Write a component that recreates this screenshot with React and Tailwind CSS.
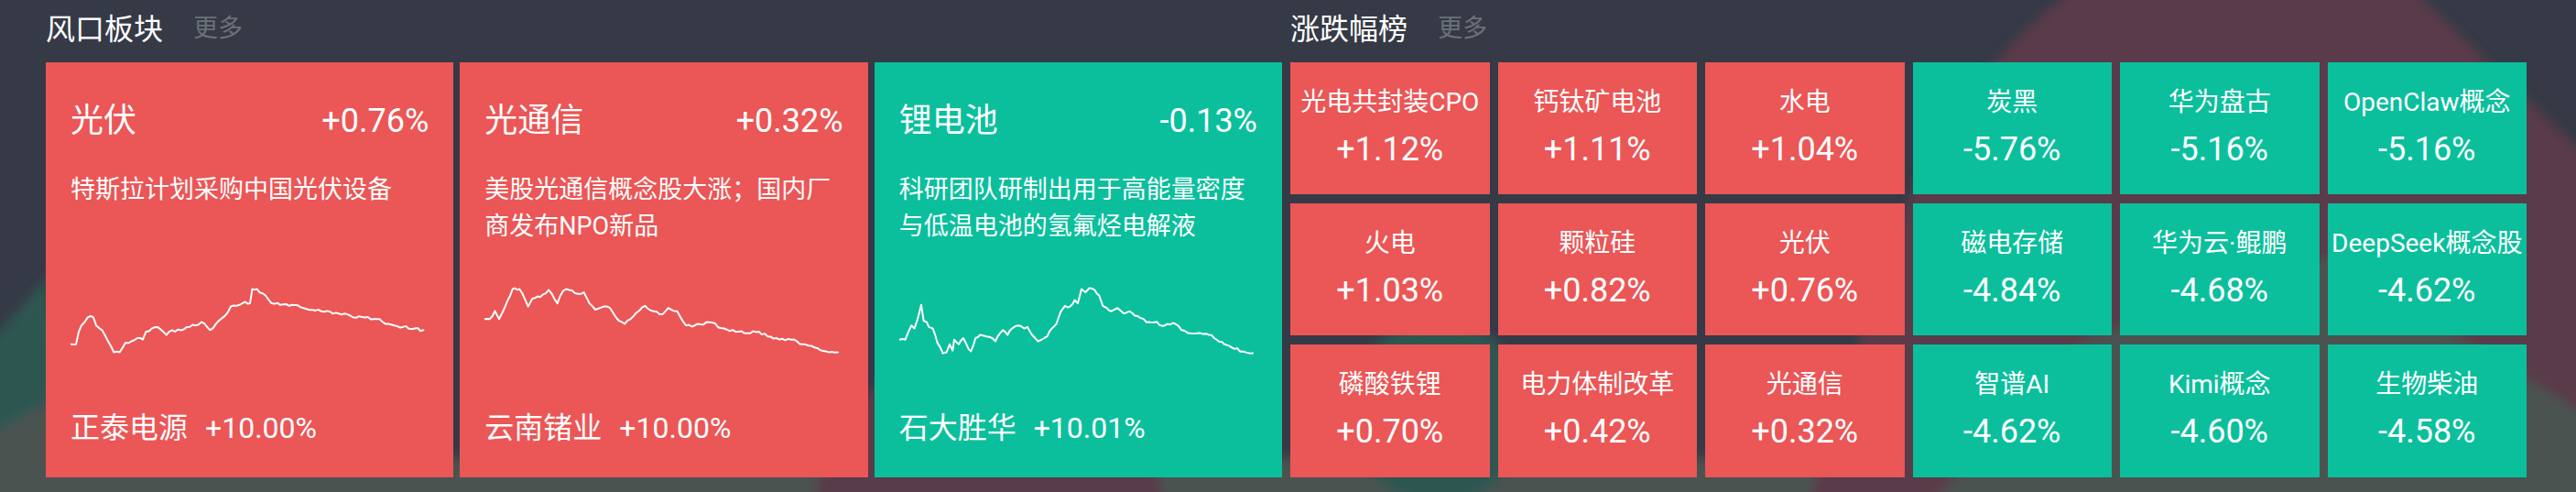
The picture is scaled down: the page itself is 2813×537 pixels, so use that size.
import React from "react";

const C1 = [[77.8,375.3],[83,375.3],[86,361.6],[89,354.7],[95.7,346],[98.9,344.4],[102,346],[105,354.7],[111.6,360],[118,372],[124.4,384],[130.7,384],[134,378.8],[137,373.6],[143.5,372],[150,368.5],[156,370],[159.4,361.6],[165.8,358],[172,356.4],[181.8,365],[188,360],[197.7,360],[204,356.4],[213.6,354.7],[220,351],[229.6,359.8],[239,349.5],[245.5,344.4],[252,334],[261.5,332.3],[267.8,328.9],[273,330.6],[275.5,315],[280.6,315],[290,322],[296.6,330.6],[306,332.3],[319,332.3],[331.6,335.7],[350.8,339.2],[366.7,340.9],[379.5,342.6],[385.8,346],[398.6,346],[411.4,347.8],[424,353],[440,356.4],[452.8,358],[462.4,359.8]];

const C2 = [[529.3,347.8],[535,347.8],[540.8,339],[545.3,347.8],[549.7,339],[554.8,327],[560,315],[567.6,315],[570.8,320],[577,334],[581.6,325.4],[590,323.7],[599.5,316],[609,330.6],[615.4,316.8],[621.8,316],[631.4,320.2],[637.8,318.5],[644,330.6],[650.5,337.5],[660,334],[666.5,335.7],[676,349.5],[682.4,353],[688.8,347.8],[695,341],[704.7,333.3],[714.3,339.2],[723.9,342.6],[730,335.7],[739.8,339.2],[749.4,354.7],[759,354.7],[774.9,351.2],[790.8,358],[806.8,361.6],[816.3,363.3],[829,361.6],[838.6,366.7],[848.2,368.5],[864.2,370.2],[876.9,375.3],[889.7,378.8],[905.6,384],[915.2,384]];

const C3 = [[981.7,370.2],[988.3,370.2],[991.7,361.6],[995,354.7],[998.3,358],[1001.7,347.8],[1005.7,332.3],[1008.3,349.5],[1011.7,351.2],[1014,356.4],[1018.3,358],[1023.3,373.6],[1029.3,385],[1033.3,384],[1036.7,375.3],[1040,382.2],[1041.7,370.2],[1046.7,375.3],[1051.7,368.5],[1055,375.3],[1060,383],[1065,368.5],[1070,365],[1076.7,366.7],[1083.3,368.5],[1086.7,372],[1091.7,363.3],[1095,359.8],[1100,365],[1105,358],[1111.7,354.7],[1118.3,358],[1121.7,356.4],[1126.7,365],[1133.3,372],[1140,368.5],[1143.3,366.7],[1148.3,358],[1153.3,353],[1158.3,339.2],[1162.7,333.3],[1168.3,334],[1173.3,327],[1176.7,330.6],[1180.7,315],[1185,318.5],[1189.3,314],[1195,316],[1200,322],[1204,333.3],[1208.3,335.7],[1213.3,339.2],[1220,335.7],[1226.7,341.6],[1233.3,339.2],[1241.7,344.4],[1251.7,351.2],[1260,351.2],[1271.7,354.7],[1283.3,353],[1290,359.8],[1300,363.3],[1306.7,363.3],[1320,365],[1328.3,370.2],[1336.7,375.3],[1345,378.8],[1356.7,383],[1367.7,385]];

function jag(pts, seed) {
  const out = [];
  let k = 0;
  for (let i = 0; i < pts.length - 1; i++) {
    const [x0, y0] = pts[i];
    const [x1, y1] = pts[i + 1];
    const n = Math.max(1, Math.round((x1 - x0) / 3));
    for (let j = 0; j < n; j++) {
      const t = j / n;
      let y = y0 + (y1 - y0) * t;
      if (j > 0) {
        const r = Math.sin((k + 1) * 12.9898 + seed * 78.233) * 43758.5453;
        y += (r - Math.floor(r) - 0.5) * 3;
      }
      out.push([x0 + (x1 - x0) * t, y]);
      k++;
    }
  }
  out.push(pts[pts.length - 1]);
  return out;
}

function Sparkline({ pts, ox, seed }) {
  const d = jag(pts, seed)
    .map(([x, y]) => `${(x - ox).toFixed(1)},${(y - 303.5).toFixed(1)}`)
    .join(" ");
  return (
    <svg className="mt-[37px] block" width="391" height="90" viewBox="0 0 391 90">
      <polyline points={d} fill="none" stroke="#ffffff" strokeWidth="2" strokeLinejoin="round" strokeLinecap="round" />
    </svg>
  );
}

const BIG = [
  { name: "光伏", pct: "+0.76%", desc: "特斯拉计划采购中国光伏设备", stock: "正泰电源", spct: "+10.00%", up: true, pts: C1, ox: 77, seed: 1 },
  { name: "光通信", pct: "+0.32%", desc: "美股光通信概念股大涨；国内厂商发布NPO新品", stock: "云南锗业", spct: "+10.00%", up: true, pts: C2, ox: 529.3, seed: 2 },
  { name: "锂电池", pct: "-0.13%", desc: "科研团队研制出用于高能量密度与低温电池的氢氟烃电解液", stock: "石大胜华", spct: "+10.01%", up: false, pts: C3, ox: 981.7, seed: 3 },
];

const SMALL = [
  ["光电共封装CPO", "+1.12%", true], ["钙钛矿电池", "+1.11%", true], ["水电", "+1.04%", true],
  ["炭黑", "-5.76%", false], ["华为盘古", "-5.16%", false], ["OpenClaw概念", "-5.16%", false],
  ["火电", "+1.03%", true], ["颗粒硅", "+0.82%", true], ["光伏", "+0.76%", true],
  ["磁电存储", "-4.84%", false], ["华为云·鲲鹏", "-4.68%", false], ["DeepSeek概念股", "-4.62%", false],
  ["磷酸铁锂", "+0.70%", true], ["电力体制改革", "+0.42%", true], ["光通信", "+0.32%", true],
  ["智谱AI", "-4.62%", false], ["Kimi概念", "-4.60%", false], ["生物柴油", "-4.58%", false],
];

function Background() {
  return (
    <svg className="absolute inset-0" width="2813" height="537" viewBox="0 0 2813 537">
      <defs>
        <filter id="soft" x="-10%" y="-10%" width="120%" height="120%">
          <feGaussianBlur stdDeviation="6" />
        </filter>
      </defs>
      <g filter="url(#soft)">
        <path d="M-20 470 L55 440 L300 500 L2840 500 L2840 600 L-20 600 Z" fill="#4c5351" />
        <path d="M-20 385 L52 302 L70 430 L-20 480 Z" fill="#2e5651" />
        <circle cx="1080" cy="565" r="190" fill="#583a48" />
        <circle cx="1570" cy="450" r="100" fill="#2e5651" />
        <path d="M2290 -30 L2615 -30 L2840 185 L2840 600 L1960 600 L2040 340 Q2110 90 2290 -30 Z" fill="#5a3b4a" />
        <path d="M2540 280 L2840 462 L2840 600 L2060 600 L2274 372 Z" fill="#4c5351" />
      </g>
    </svg>
  );
}

function Header({ title }) {
  return (
    <div className="flex h-[61px] items-center pt-[2px]">
      <span className="text-[32px] leading-none text-white">{title}</span>
      <span className="ml-[33px] text-[27px] leading-none text-[#6c7078]">更多</span>
    </div>
  );
}

export default function App() {
  return (
    <div className="relative h-[537px] w-[2813px] overflow-hidden bg-[#353a46] font-['Roboto','Noto_Sans_CJK_SC',sans-serif] text-white">
      <Background />
      <div className="relative flex gap-[9px] pl-[50px]">
        <section className="w-[1350px]">
          <Header title="风口板块" />
          <div className="mt-[6.5px] grid h-[453px] grid-cols-3 gap-[7px]">
            {BIG.map((c) => (
              <div key={c.name} className={`flex flex-col px-[27px] pt-[37px] ${c.up ? "bg-[#eb5656]" : "bg-[#0bbf9d]"}`}>
                <div className="flex h-[54px] justify-between text-[36px] leading-[54px]">
                  <span>{c.name}</span>
                  <span>{c.pct}</span>
                </div>
                <p className="mt-[28px] h-[80px] text-[27px] leading-[40px]">{c.desc}</p>
                <Sparkline pts={c.pts} ox={c.ox} seed={c.seed} />
                <div className="mt-[50px] flex h-[46px] items-center text-[32px] leading-[46px]">
                  <span>{c.stock}</span>
                  <span className="ml-[19px]">{c.spct}</span>
                </div>
              </div>
            ))}
          </div>
        </section>
        <section className="w-[1350px]">
          <Header title="涨跌幅榜" />
          <div className="mt-[6.5px] grid h-[453px] grid-cols-6 grid-rows-3 gap-x-[9px] gap-y-[9.5px]">
            {SMALL.map(([n, p, up], i) => (
              <div key={i} className={`flex flex-col items-center pt-[24px] ${up ? "bg-[#eb5656]" : "bg-[#0bbf9d]"}`}>
                <span className="h-[40px] whitespace-nowrap text-[28px] leading-[40px]">{n}</span>
                <span className="mt-[6px] text-[36px] leading-[50px]">{p}</span>
              </div>
            ))}
          </div>
        </section>
      </div>
    </div>
  );
}
